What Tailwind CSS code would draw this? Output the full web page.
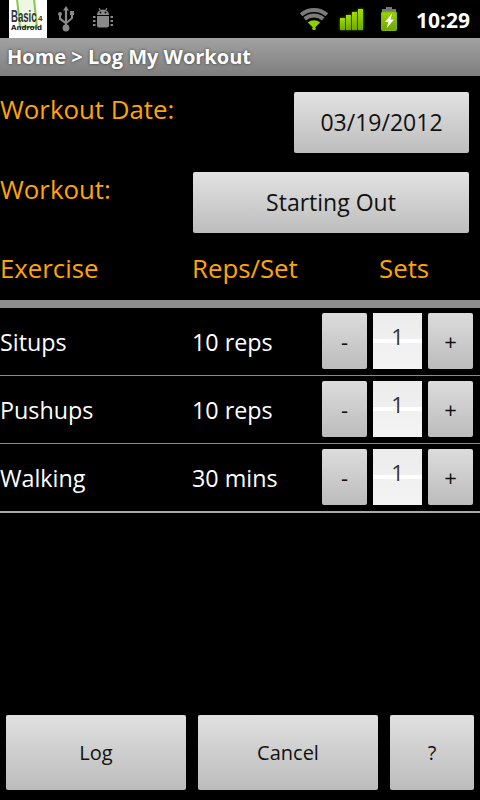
<!DOCTYPE html>
<html lang="en">
<head>
    <meta charset="UTF-8">
    <meta name="viewport" content="width=device-width, initial-scale=1.0">
    <title>Log My Workout</title>
    <script src="https://cdn.jsdelivr.net/npm/@tailwindcss/browser@4"></script>
</head>
<body class="bg-black">
<div class="w-[480px] h-[800px] overflow-hidden flex flex-col bg-black font-['Open_Sans','Noto_Sans',sans-serif]">

    <!-- Status bar -->
    <div class="h-[38px] flex items-center bg-black relative shrink-0">
        <div class="ml-[9px] w-[38px] h-[38px] bg-white relative overflow-hidden">
            <svg class="absolute left-0 top-0" width="38" height="38" viewBox="0 0 38 38">
                <path d="M8 -1L11 27H28L25 -1Z" fill="#eef7e2" stroke="#86c84e" stroke-width="2"/>
            </svg>
            <div class="absolute left-[2px] top-[8px] text-[16px] leading-[18px] font-bold text-[#333] origin-left scale-x-[0.6] font-['Liberation_Sans',sans-serif]">Basic</div>
            <div class="absolute left-[29px] top-[14px] text-[8px] leading-[9px] font-bold text-[#333] font-['Liberation_Sans',sans-serif]">4</div>
            <div class="absolute left-[2px] top-[24px] text-[7px] leading-[9px] font-bold text-[#222] font-['DejaVu_Sans',sans-serif]">Android</div>
        </div>
        <svg class="ml-[7px]" width="24" height="32" viewBox="0 0 24 32">
            <g fill="#8a8a8a">
                <path d="M12 3l3 4.500h-1.900V24h-2.200V7.500H9Z"/>
                <circle cx="12" cy="25" r="3.400"/>
                <circle cx="6" cy="11" r="2"/>
                <path d="M5 12h2v3l5 4v2.600L5 16.500Z"/>
                <path d="M16 8h4v4h-1v3.500l-7 6v-2.600l5-4.200V12h-1Z"/>
            </g>
        </svg>
        <svg class="absolute left-[92px] top-[7px]" width="22" height="22" viewBox="0 0 22 22">
            <g fill="#8a8a8a">
                <path d="M5 8a6 5.500 0 0 1 12 0Z"/>
                <path d="M7 1.200l1.600 2.600M15 1.200l-1.600 2.600" stroke="#8a8a8a" stroke-width="1.200"/>
                <path d="M5 9h12v9.500a2 2 0 0 1-2 2H7a2 2 0 0 1-2-2Z"/>
                <path d="M1 9h2.500v2H1ZM1 13h2.500v2H1ZM1 17h2.500v2H1ZM18.500 9H21v2h-2.500ZM18.500 13H21v2h-2.500ZM18.500 17H21v2h-2.500Z"/>
            </g>
            <circle cx="8.500" cy="5.500" r="0.900" fill="#000"/>
            <circle cx="13.500" cy="5.500" r="0.900" fill="#000"/>
        </svg>
        <svg class="absolute left-[298px] top-[6px]" width="32" height="26" viewBox="0 0 32 26" fill="none">
            <path d="M3.100 8.700A20 20 0 0 1 28.900 8.700" stroke="#7a7a7a" stroke-width="4"/>
            <path d="M6.700 12.900A14.500 14.500 0 0 1 25.300 12.900" stroke="#7a7a7a" stroke-width="4"/>
            <path d="M9.800 16.400A9.600 9.600 0 0 1 22.200 16.400L17 21.500H15Z" fill="#8ed000"/>
            <circle cx="16" cy="22.500" r="1.800" fill="#8ed000"/>
        </svg>
        <div class="absolute left-[340px] top-[9px] h-[21px] flex items-end gap-[1px]">
            <div class="w-[5px] h-[12px] bg-gradient-to-b from-[#a4e000] to-[#6ea800] shadow-[0_0_3px_#5f8f00]"></div>
            <div class="w-[5px] h-[15px] bg-gradient-to-b from-[#a4e000] to-[#6ea800] shadow-[0_0_3px_#5f8f00]"></div>
            <div class="w-[5px] h-[18px] bg-gradient-to-b from-[#a4e000] to-[#6ea800] shadow-[0_0_3px_#5f8f00]"></div>
            <div class="w-[5px] h-[21px] bg-gradient-to-b from-[#a4e000] to-[#6ea800] shadow-[0_0_3px_#5f8f00]"></div>
        </div>
        <svg class="absolute left-[380px] top-[7px]" width="18" height="24" viewBox="0 0 18 24">
            <path d="M6 0h6v2h4v3H2V2h4Z" fill="#777"/>
            <defs>
                <linearGradient id="battery-fill" x1="0" y1="0" x2="0" y2="1">
                    <stop offset="0" stop-color="#9ad400"/>
                    <stop offset="1" stop-color="#6ea400"/>
                </linearGradient>
            </defs>
            <rect x="1.500" y="5" width="15" height="18.500" rx="1" fill="url(#battery-fill)" stroke="#86b800"/>
            <path d="M12 6.500L5 15h3.500L6.500 21.500 14 12.500H10.500Z" fill="#fff"/>
        </svg>
        <div class="absolute right-[10px] top-[6px] text-[21px] leading-[28px] font-bold text-white">10:29</div>
    </div>

    <!-- Title bar -->
    <div class="h-[38px] shrink-0 flex items-center pl-[7px] bg-gradient-to-b from-[#a2a2a2] to-[#7e7e7e]">
        <span class="text-[20px] font-bold text-white [text-shadow:0_0_3px_#333]">Home &gt; Log My Workout</span>
    </div>

    <!-- Date and workout -->
    <div class="flex justify-between items-start h-[61px] mt-[16px] pr-[11px]">
        <span class="text-[25.8px] leading-[34px] text-[#ffa500]">Workout Date:</span>
        <button class="w-[175px] h-[61px] rounded-[2px] bg-gradient-to-b from-[#e2e2e2] to-[#bdbdbd] text-[23px] text-[#111]">03/19/2012</button>
    </div>
    <div class="flex justify-between items-start h-[61px] mt-[19px] pr-[11px]">
        <span class="text-[25.8px] leading-[34px] text-[#ffa500]">Workout:</span>
        <button class="w-[276px] h-[61px] rounded-[2px] bg-gradient-to-b from-[#e2e2e2] to-[#bdbdbd] text-[23px] text-[#111]">Starting Out</button>
    </div>

    <!-- Column headings -->
    <div class="flex h-[36px] mt-[17px] text-[25.8px] leading-[36px] text-[#ffa500]">
        <span class="w-[192px]">Exercise</span>
        <span class="w-[187px]">Reps/Set</span>
        <span>Sets</span>
    </div>
    <div class="h-[8px] mt-[14px] bg-[#8c8c8c] shrink-0"></div>

    <!-- Exercises -->
    <div class="flex flex-col">
        <div class="h-[68px] flex items-start border-b border-[#8a8a8a] pt-[5px]">
            <span class="w-[192px] text-[23.300px] leading-[58px] text-white">Situps</span>
            <span class="w-[130px] text-[23.300px] leading-[58px] text-white">10 reps</span>
            <div class="flex gap-[6px]">
                <button class="w-[45px] h-[56px] rounded-[2px] bg-gradient-to-b from-[#dcdcdc] to-[#bcbcbc] text-[22px] text-[#111]">-</button>
                <div class="w-[49px] h-[56px] relative bg-gradient-to-b from-[#ececec] to-[#f4f4f4] text-center text-[22px] leading-[46px] text-[#333]">
                    <div class="absolute left-0 right-0 top-[26px] h-[4px] bg-white"></div>
                    <span class="relative">1</span>
                </div>
                <button class="w-[45px] h-[56px] rounded-[2px] bg-gradient-to-b from-[#dcdcdc] to-[#bcbcbc] text-[22px] text-[#111]">+</button>
            </div>
        </div>
        <div class="h-[68px] flex items-start border-b border-[#8a8a8a] pt-[5px]">
            <span class="w-[192px] text-[23.300px] leading-[58px] text-white">Pushups</span>
            <span class="w-[130px] text-[23.300px] leading-[58px] text-white">10 reps</span>
            <div class="flex gap-[6px]">
                <button class="w-[45px] h-[56px] rounded-[2px] bg-gradient-to-b from-[#dcdcdc] to-[#bcbcbc] text-[22px] text-[#111]">-</button>
                <div class="w-[49px] h-[56px] relative bg-gradient-to-b from-[#ececec] to-[#f4f4f4] text-center text-[22px] leading-[46px] text-[#333]">
                    <div class="absolute left-0 right-0 top-[26px] h-[4px] bg-white"></div>
                    <span class="relative">1</span>
                </div>
                <button class="w-[45px] h-[56px] rounded-[2px] bg-gradient-to-b from-[#dcdcdc] to-[#bcbcbc] text-[22px] text-[#111]">+</button>
            </div>
        </div>
        <div class="h-[69px] flex items-start border-b-2 border-[#a8a8a8] pt-[5px]">
            <span class="w-[192px] text-[23.300px] leading-[58px] text-white">Walking</span>
            <span class="w-[130px] text-[23.300px] leading-[58px] text-white">30 mins</span>
            <div class="flex gap-[6px]">
                <button class="w-[45px] h-[56px] rounded-[2px] bg-gradient-to-b from-[#dcdcdc] to-[#bcbcbc] text-[22px] text-[#111]">-</button>
                <div class="w-[49px] h-[56px] relative bg-gradient-to-b from-[#ececec] to-[#f4f4f4] text-center text-[22px] leading-[46px] text-[#333]">
                    <div class="absolute left-0 right-0 top-[26px] h-[4px] bg-white"></div>
                    <span class="relative">1</span>
                </div>
                <button class="w-[45px] h-[56px] rounded-[2px] bg-gradient-to-b from-[#dcdcdc] to-[#bcbcbc] text-[22px] text-[#111]">+</button>
            </div>
        </div>
    </div>

    <!-- Bottom buttons -->
    <div class="mt-auto mb-[10px] flex gap-[12px] px-[6px]">
        <button class="w-[180px] h-[75px] rounded-[2px] bg-gradient-to-b from-[#e0e0e0] to-[#bcbcbc] text-[20px] text-[#111]">Log</button>
        <button class="w-[180px] h-[75px] rounded-[2px] bg-gradient-to-b from-[#e0e0e0] to-[#bcbcbc] text-[20px] text-[#111]">Cancel</button>
        <button class="w-[84px] h-[75px] rounded-[2px] bg-gradient-to-b from-[#e0e0e0] to-[#bcbcbc] text-[20px] text-[#111]">?</button>
    </div>
</div>
</body>
</html>
